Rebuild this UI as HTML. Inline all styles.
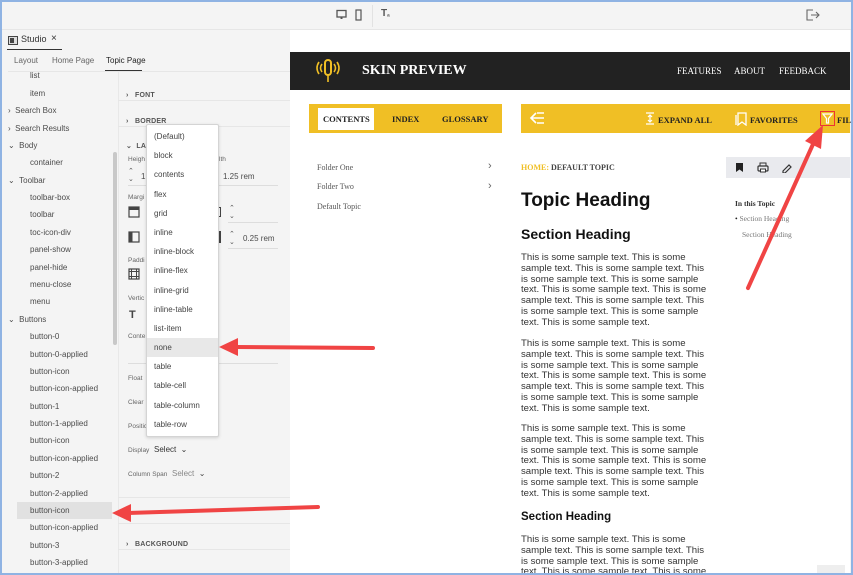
<!DOCTYPE html>
<html><head><meta charset="utf-8"><style>
*{margin:0;padding:0;box-sizing:border-box}
html,body{width:853px;height:575px;overflow:hidden}
body{background:#f4f4f4;font-family:"Liberation Sans",sans-serif;position:relative}
.a{position:absolute;white-space:nowrap}
.t{font-size:8px;color:#4b4b4b}
.s{font-family:"Liberation Serif",serif}
.p{position:absolute;left:521px;font-size:9.6px;line-height:10.75px;color:#333;white-space:nowrap}
.dd div{height:19.2px;line-height:19.2px;padding-left:7px;font-size:8px;color:#444}
.h{font-size:7px;font-weight:bold;color:#555;letter-spacing:.2px}
.lab{font-size:6.5px;color:#666}
</style></head><body>
<div class="a" style="left:0;top:0;width:853px;height:575px;border:2px solid #8fb3e3;z-index:50;pointer-events:none"></div>
<div class="a" style="left:0;top:0;width:853px;height:30px;background:#f4f4f4;border-bottom:1px solid #e6e6e6"></div>
<svg class="a" style="left:336px;top:9px" width="12" height="12"><rect x="1" y="1.5" width="9" height="6.5" fill="none" stroke="#555" stroke-width="1.3"/><rect x="4.5" y="8" width="2" height="2" fill="#555"/></svg>
<svg class="a" style="left:355px;top:9px" width="8" height="13"><rect x="1" y="1" width="5" height="10" fill="none" stroke="#555" stroke-width="1.2"/></svg>
<div class="a" style="left:372px;top:5px;width:1px;height:22px;background:#e2e2e2"></div>
<div class="a" style="left:381px;top:8px;font-size:10px;color:#555;font-weight:bold">T<span style="font-size:7px">ₐ</span></div>
<svg class="a" style="left:806px;top:9px" width="14" height="12"><path d="M7 1H1v10h6M5 6h8M10 3l3 3-3 3" fill="none" stroke="#666" stroke-width="1.1"/></svg>
<svg class="a" style="left:8px;top:36px" width="10" height="9"><rect x="0.5" y="0.5" width="9" height="8" fill="#ddd" stroke="#444"/><rect x="2" y="2" width="4" height="5" fill="#444"/></svg>
<div class="a" style="left:21px;top:34px;font-size:9px;color:#333">Studio</div>
<div class="a" style="left:51px;top:33px;font-size:10px;color:#333">×</div>
<div class="a" style="left:7px;top:49px;width:55px;height:1px;background:#333"></div>
<div class="a" style="left:14px;top:56px;font-size:8px;color:#666">Layout</div>
<div class="a" style="left:52px;top:56px;font-size:8px;color:#666">Home Page</div>
<div class="a" style="left:106px;top:56px;font-size:8px;color:#222">Topic Page</div>
<div class="a" style="left:105px;top:70px;width:37px;height:1.5px;background:#333"></div>
<div class="a" style="left:8px;top:71px;width:282px;height:1px;background:#e6e6e6"></div>
<div class="a t" style="left:30px;top:71px">list</div>
<div class="a t" style="left:30px;top:89px">item</div>
<div class="a t" style="left:8px;top:106px">›&nbsp;&nbsp;Search Box</div>
<div class="a t" style="left:8px;top:124px">›&nbsp;&nbsp;Search Results</div>
<div class="a t" style="left:8px;top:141px">⌄&nbsp;&nbsp;Body</div>
<div class="a t" style="left:30px;top:158px">container</div>
<div class="a t" style="left:8px;top:176px">⌄&nbsp;&nbsp;Toolbar</div>
<div class="a t" style="left:30px;top:193px">toolbar-box</div>
<div class="a t" style="left:30px;top:210px">toolbar</div>
<div class="a t" style="left:30px;top:228px">toc-icon-div</div>
<div class="a t" style="left:30px;top:245px">panel-show</div>
<div class="a t" style="left:30px;top:263px">panel-hide</div>
<div class="a t" style="left:30px;top:280px">menu-close</div>
<div class="a t" style="left:30px;top:297px">menu</div>
<div class="a t" style="left:8px;top:315px">⌄&nbsp;&nbsp;Buttons</div>
<div class="a" style="left:17px;top:502px;width:95px;height:17px;background:#e1e1e1"></div>
<div class="a t" style="left:30px;top:332px">button-0</div>
<div class="a t" style="left:30px;top:350px">button-0-applied</div>
<div class="a t" style="left:30px;top:367px">button-icon</div>
<div class="a t" style="left:30px;top:384px">button-icon-applied</div>
<div class="a t" style="left:30px;top:402px">button-1</div>
<div class="a t" style="left:30px;top:419px">button-1-applied</div>
<div class="a t" style="left:30px;top:436px">button-icon</div>
<div class="a t" style="left:30px;top:454px">button-icon-applied</div>
<div class="a t" style="left:30px;top:471px">button-2</div>
<div class="a t" style="left:30px;top:489px">button-2-applied</div>
<div class="a t" style="left:30px;top:506px">button-icon</div>
<div class="a t" style="left:30px;top:523px">button-icon-applied</div>
<div class="a t" style="left:30px;top:541px">button-3</div>
<div class="a t" style="left:30px;top:558px">button-3-applied</div>
<div class="a" style="left:113px;top:152px;width:4px;height:193px;background:#c8c8c8;border-radius:2px"></div>
<div class="a" style="left:118px;top:72px;width:1px;height:503px;background:#e8e8e8"></div>
<div class="a" style="left:126px;top:84px"><span class="h">›&nbsp;&nbsp;&nbsp;FONT</span></div>
<div class="a" style="left:118px;top:100px;width:172px;height:1px;background:#e6e6e6"></div>
<div class="a" style="left:126px;top:110px"><span class="h">›&nbsp;&nbsp;&nbsp;BORDER</span></div>
<div class="a" style="left:118px;top:126px;width:172px;height:1px;background:#e6e6e6"></div>
<div class="a" style="left:126px;top:135px"><span class="h">⌄&nbsp;&nbsp;LA</span></div>
<div class="a lab" style="left:128px;top:156px">Heigh</div>
<div class="a lab" style="left:219px;top:156px">lth</div>
<div class="a" style="left:128px;top:167px;font-size:7px;color:#555">⌃<br>⌄</div>
<div class="a t" style="left:141px;top:172px">1.</div>
<div class="a t" style="left:223px;top:172px">1.25 rem</div>
<div class="a" style="left:128px;top:185px;width:150px;height:1px;background:#ddd"></div>
<div class="a lab" style="left:128px;top:194px">Margi</div>
<svg class="a" style="left:128px;top:206px" width="12" height="12"><rect x="1" y="1" width="10" height="10" fill="none" stroke="#444" stroke-width="1.2"/><rect x="1" y="1" width="10" height="3" fill="#444"/></svg>
<div class="a" style="left:216px;top:207px;width:5px;height:10px;border:1.5px solid #444"></div>
<div class="a" style="left:229px;top:204px;font-size:7px;color:#555">⌃<br>⌄</div>
<div class="a" style="left:228px;top:222px;width:50px;height:1px;background:#ddd"></div>
<svg class="a" style="left:128px;top:231px" width="12" height="12"><rect x="1" y="1" width="10" height="10" fill="none" stroke="#444" stroke-width="1.2"/><rect x="1" y="1" width="3.5" height="10" fill="#444"/></svg>
<div class="a" style="left:216px;top:231px;width:5px;height:12px;background:#444"></div>
<div class="a" style="left:229px;top:230px;font-size:7px;color:#555">⌃<br>⌄</div>
<div class="a t" style="left:243px;top:234px">0.25 rem</div>
<div class="a" style="left:228px;top:248px;width:50px;height:1px;background:#ddd"></div>
<div class="a lab" style="left:128px;top:257px">Paddi</div>
<svg class="a" style="left:128px;top:268px" width="12" height="12"><rect x="1" y="1" width="10" height="10" fill="none" stroke="#444" stroke-width="1.2"/><path d="M1 3.5h10M1 8.5h10M3.5 1v10M8.5 1v10" stroke="#444"/></svg>
<div class="a lab" style="left:128px;top:295px">Vertic</div>
<div class="a" style="left:129px;top:309px;font-size:11px;font-weight:bold;color:#444">T</div>
<div class="a lab" style="left:128px;top:333px">Conte</div>
<div class="a" style="left:128px;top:363px;width:150px;height:1px;background:#ddd"></div>
<div class="a lab" style="left:128px;top:375px">Float</div>
<div class="a lab" style="left:128px;top:399px">Clear</div>
<div class="a lab" style="left:128px;top:423px">Positic</div>
<div class="a lab" style="left:128px;top:447px">Display</div>
<div class="a" style="left:154px;top:445px;font-size:8px;color:#333">Select&nbsp;&nbsp;⌄</div>
<div class="a lab" style="left:128px;top:471px">Column Span</div>
<div class="a" style="left:172px;top:469px;font-size:8px;color:#888">Select&nbsp;&nbsp;<span style="color:#444">⌄</span></div>
<div class="a" style="left:118px;top:497px;width:172px;height:1px;background:#e6e6e6"></div>
<div class="a" style="left:118px;top:523px;width:172px;height:1px;background:#e6e6e6"></div>
<div class="a" style="left:126px;top:533px"><span class="h">›&nbsp;&nbsp;&nbsp;BACKGROUND</span></div>
<div class="a" style="left:118px;top:549px;width:172px;height:1px;background:#e6e6e6"></div>
<div class="a dd" style="left:146px;top:124px;width:73px;height:313px;background:#fff;border:1px solid #d4d4d4;border-radius:2px;box-shadow:0 1px 3px rgba(0,0,0,.15);padding-top:2px;z-index:5">
<div>(Default)</div><div>block</div><div>contents</div><div>flex</div><div>grid</div><div>inline</div><div>inline-block</div><div>inline-flex</div><div>inline-grid</div><div>inline-table</div><div>list-item</div><div style="background:#e8e8e8">none</div><div>table</div><div>table-cell</div><div>table-column</div><div>table-row</div>
</div>
<div class="a" style="left:290px;top:30px;width:560px;height:545px;background:#fff"></div>
<div class="a" style="left:290px;top:52px;width:560px;height:38px;background:#222"></div>
<svg class="a" style="left:316px;top:57px" width="24" height="28"><rect x="9" y="3" width="6" height="15" rx="3" fill="none" stroke="#f0bf25" stroke-width="2"/><path d="M12 18v7M6 7q-3 4 0 8M3 5q-4 6 0 12M18 7q3 4 0 8M21 5q4 6 0 12" fill="none" stroke="#f0bf25" stroke-width="1.6"/></svg>
<div class="a s" style="left:362px;top:63px;font-size:14px;font-weight:bold;color:#fff">SKIN PREVIEW</div>
<div class="a s" style="left:677px;top:66px;font-size:9px;color:#fff">FEATURES</div>
<div class="a s" style="left:734px;top:66px;font-size:9px;color:#fff">ABOUT</div>
<div class="a s" style="left:779px;top:66px;font-size:9px;color:#fff">FEEDBACK</div>
<div class="a" style="left:309px;top:104px;width:193px;height:29px;background:#f0bf25"></div>
<div class="a" style="left:318px;top:108px;width:56px;height:22px;background:#fff"></div>
<div class="a s" style="left:323px;top:114px;font-size:8.5px;font-weight:bold;color:#222">CONTENTS</div>
<div class="a s" style="left:392px;top:114px;font-size:8.5px;font-weight:bold;color:#222">INDEX</div>
<div class="a s" style="left:442px;top:114px;font-size:8.5px;font-weight:bold;color:#222">GLOSSARY</div>
<div class="a" style="left:521px;top:104px;width:329px;height:29px;background:#f0bf25"></div>
<svg class="a" style="left:529px;top:111px" width="16" height="14"><path d="M7 2L2 7l5 5M2 7h13M8 2h7M8 12h7" fill="none" stroke="#fff" stroke-width="1.6"/></svg>
<svg class="a" style="left:645px;top:112px" width="10" height="13"><path d="M1 1h8M1 12h8M5 3v7M3 5l2-2 2 2M3 8l2 2 2-2" fill="none" stroke="#fff" stroke-width="1.2"/></svg>
<div class="a s" style="left:658px;top:115px;font-size:8.5px;font-weight:bold;color:#222">EXPAND ALL</div>
<svg class="a" style="left:735px;top:112px" width="12" height="14"><path d="M3 1h8v12l-4-3-4 3zM1 3v10" fill="none" stroke="#fff" stroke-width="1.3"/></svg>
<div class="a s" style="left:750px;top:115px;font-size:8.5px;font-weight:bold;color:#222">FAVORITES</div>
<div class="a" style="left:820px;top:111px;width:15px;height:15px;border:1.5px solid #e33"></div>
<svg class="a" style="left:822px;top:113px" width="11" height="11"><path d="M1 1h9L6.5 5.5v4.5h-2V5.5z" fill="none" stroke="#fff" stroke-width="1.2"/></svg>
<div class="a s" style="left:837px;top:115px;font-size:8.5px;font-weight:bold;color:#222">FIL</div>
<div class="a s" style="left:317px;top:163px;font-size:8px;color:#555">Folder One</div>
<div class="a s" style="left:317px;top:182px;font-size:8px;color:#555">Folder Two</div>
<div class="a s" style="left:317px;top:202px;font-size:8px;color:#555">Default Topic</div>
<div class="a" style="left:488px;top:160px;font-size:11px;color:#666">›</div>
<div class="a" style="left:488px;top:180px;font-size:11px;color:#666">›</div>
<div class="a s" style="left:521px;top:163px;font-size:8px;font-weight:bold;color:#444"><span style="color:#f0bf25">HOME:</span> DEFAULT TOPIC</div>
<div class="a" style="left:521px;top:190px;font-size:19px;font-weight:bold;color:#111">Topic Heading</div>
<div class="a" style="left:521px;top:226px;font-size:14px;font-weight:bold;color:#111">Section Heading</div>
<div class="p" style="top:253px">This is some sample text. This is some<br>sample text. This is some sample text. This<br>is some sample text. This is some sample<br>text. This is some sample text. This is some<br>sample text. This is some sample text. This<br>is some sample text. This is some sample<br>text. This is some sample text.</div>
<div class="p" style="top:339px">This is some sample text. This is some<br>sample text. This is some sample text. This<br>is some sample text. This is some sample<br>text. This is some sample text. This is some<br>sample text. This is some sample text. This<br>is some sample text. This is some sample<br>text. This is some sample text.</div>
<div class="p" style="top:424px">This is some sample text. This is some<br>sample text. This is some sample text. This<br>is some sample text. This is some sample<br>text. This is some sample text. This is some<br>sample text. This is some sample text. This<br>is some sample text. This is some sample<br>text. This is some sample text.</div>
<div class="a" style="left:521px;top:511px;font-size:11.5px;font-weight:bold;color:#111">Section Heading</div>
<div class="p" style="top:535px">This is some sample text. This is some<br>sample text. This is some sample text. This<br>is some sample text. This is some sample<br>text. This is some sample text. This is some</div>
<div class="a" style="left:726px;top:157px;width:124px;height:21px;background:#e9eaee"></div>
<svg class="a" style="left:735px;top:162px" width="9" height="11"><path d="M1 1h7v9L4.5 7.5 1 10z" fill="#222"/></svg>
<svg class="a" style="left:757px;top:162px" width="12" height="11"><rect x="3" y="1" width="6" height="3" fill="none" stroke="#333"/><rect x="1" y="4" width="10" height="5" rx="1" fill="none" stroke="#333" stroke-width="1.2"/><rect x="3.5" y="7" width="5" height="3" fill="#fff" stroke="#333"/></svg>
<svg class="a" style="left:781px;top:162px" width="11" height="11"><path d="M2 9l6-6 2 2-6 6H2z" fill="none" stroke="#333" stroke-width="1.2"/></svg>
<div class="a s" style="left:735px;top:199px;font-size:7.5px;font-weight:bold;color:#333">In this Topic</div>
<div class="a s" style="left:735px;top:214px;font-size:7.5px;color:#777"><span style="color:#222">•</span> Section Heading</div>
<div class="a s" style="left:742px;top:230px;font-size:7.5px;color:#777">Section Heading</div>
<div class="a" style="left:817px;top:565px;width:28px;height:10px;background:#eee"></div>
<svg class="a" style="left:0;top:0;z-index:20" width="853" height="575">
<g stroke="#f04444" stroke-width="4" stroke-linecap="round">
<line x1="373" y1="348" x2="236" y2="347"/>
<line x1="318" y1="507" x2="128" y2="513"/>
<line x1="748" y1="288" x2="814" y2="142"/>
</g>
<g fill="#f04444">
<polygon points="219,347 238,338 238,356"/>
<polygon points="112,513 131,504 131,522"/>
<polygon points="823,125 821,149 805,141"/>
</g>
</svg>
</body></html>
